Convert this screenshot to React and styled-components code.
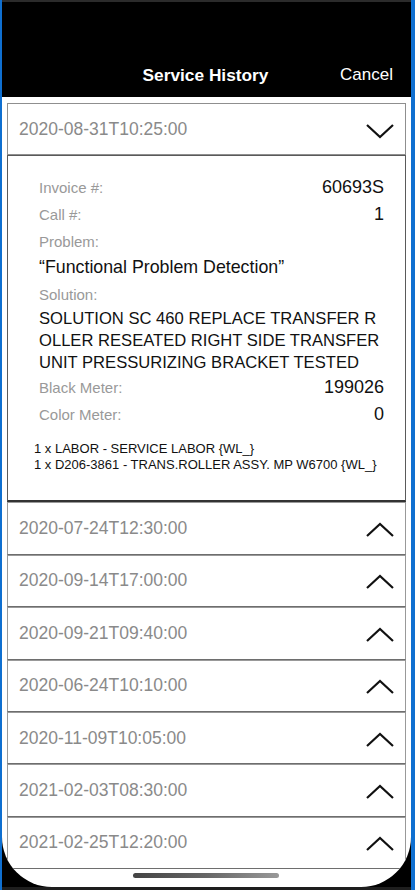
import React from 'react'
import styled, { createGlobalStyle } from 'styled-components'

const GlobalStyle = createGlobalStyle`
    html, body {
        margin: 0;
        padding: 0;
        background-color: #0f6fd0;
        font-family: "Liberation Sans", Arial, sans-serif;
    }
`

const Frame = styled.div`
    margin-left: 2px;
    width: 409px;
    height: 890px;
    box-sizing: border-box;
    background-color: #000;
    border-top: 2px solid #2b2b2b;
    border-bottom: 3px solid #1e1e1e;
    overflow: hidden;
`

const Screen = styled.div`
    position: relative;
    height: 885px;
    background-color: #fff;
    border-radius: 0 0 50px 50px;
    overflow: hidden;
`

const Header = styled.header`
    height: 95px;
    background-color: #000;
    color: #fff;
    display: grid;
    grid-template-columns: 1fr auto 1fr;
    align-items: center;
    box-sizing: border-box;
    padding-top: 51px;
    font-size: 17px;
`

const Title = styled.h1`
    grid-column: 2;
    margin: 0;
    font-size: 17.3px;
    font-weight: bold;
    position: relative;
    left: -1px;
`

const CancelButton = styled.span`
    justify-self: end;
    padding-right: 18px;
`

const List = styled.div`
    padding: 6px 5px 0 5px;
`

const ItemHeader = styled.div`
    height: 50.4px;
    display: flex;
    align-items: center;
    justify-content: space-between;
    padding: 0 11px;
    border: 1px solid ${p => (p.open ? '#8f8f8f' : '#999')};
    border-bottom-color: ${p => (p.open ? '#8f8f8f' : '#6e6e6e')};
    color: #8a8a8a;
    font-size: 17.5px;
`

const Chevron = styled.svg`
    width: 28px;
    height: 15px;
    margin-top: ${p => (p.up ? '2px' : '4px')};
    flex-shrink: 0;
`

const Details = styled.div`
    border: 1px solid #5a5a5a;
    border-bottom: 2px solid #333;
    padding: 18px 21px 27px 31px;
    color: #111;
`

const Row = styled.div`
    height: ${p => p.h || 27}px;
    display: flex;
    align-items: center;
    justify-content: space-between;
`

const Label = styled.span`
    color: #999;
    font-size: 15px;
`

const Value = styled.span`
    font-size: 18px;
`

const Text = styled.div`
    font-size: ${p => p.size || 17.8}px;
    line-height: ${p => p.lh || 26}px;
    white-space: nowrap;
`

const Parts = styled.div`
    margin: 13px 0 0 -5px;
    font-size: 13px;
    line-height: 16px;
`

const HomeBar = styled.div`
    position: absolute;
    left: 131px;
    bottom: 9px;
    width: 146px;
    height: 5px;
    border-radius: 3px;
    background: linear-gradient(90deg, #444, #666 50%, #999);
`

const ChevronIcon = ({ up }) => (
    <Chevron up={up} viewBox="0 0 28 15">
        <polyline
            points={up ? '1,14 14,2 27,14' : '1,1 14,13 27,1'}
            fill="none"
            stroke="#111"
            strokeWidth="2.2"
        />
    </Chevron>
)

const collapsed = [
    '2020-07-24T12:30:00',
    '2020-09-14T17:00:00',
    '2020-09-21T09:40:00',
    '2020-06-24T10:10:00',
    '2020-11-09T10:05:00',
    '2021-02-03T08:30:00',
    '2021-02-25T12:20:00',
]

const App = () => (
    <>
        <GlobalStyle />
        <Frame>
            <Screen>
                <Header>
                    <Title>Service History</Title>
                    <CancelButton>Cancel</CancelButton>
                </Header>

                <List>
                    <ItemHeader open>
                        <span>2020-08-31T10:25:00</span>
                        <ChevronIcon />
                    </ItemHeader>
                    <Details>
                        <Row>
                            <Label>Invoice #:</Label>
                            <Value>60693S</Value>
                        </Row>
                        <Row>
                            <Label>Call #:</Label>
                            <Value>1</Value>
                        </Row>
                        <Row h={26}>
                            <Label>Problem:</Label>
                        </Row>
                        <Text>“Functional Problem Detection”</Text>
                        <Row h={28}>
                            <Label>Solution:</Label>
                        </Row>
                        <Text size={16.6} lh={22}>
                            SOLUTION SC 460 REPLACE TRANSFER R<br />
                            OLLER RESEATED RIGHT SIDE TRANSFER<br />
                            UNIT PRESSURIZING BRACKET TESTED
                        </Text>
                        <Row>
                            <Label>Black Meter:</Label>
                            <Value>199026</Value>
                        </Row>
                        <Row>
                            <Label>Color Meter:</Label>
                            <Value>0</Value>
                        </Row>
                        <Parts>
                            1 x LABOR - SERVICE LABOR {'{WL_}'}<br />
                            1 x D206-3861 - TRANS.ROLLER ASSY. MP W6700 {'{WL_}'}
                        </Parts>
                    </Details>

                    {collapsed.map(date => (
                        <ItemHeader key={date}>
                            <span>{date}</span>
                            <ChevronIcon up />
                        </ItemHeader>
                    ))}
                </List>

                <HomeBar />
            </Screen>
        </Frame>
    </>
)

export default App
